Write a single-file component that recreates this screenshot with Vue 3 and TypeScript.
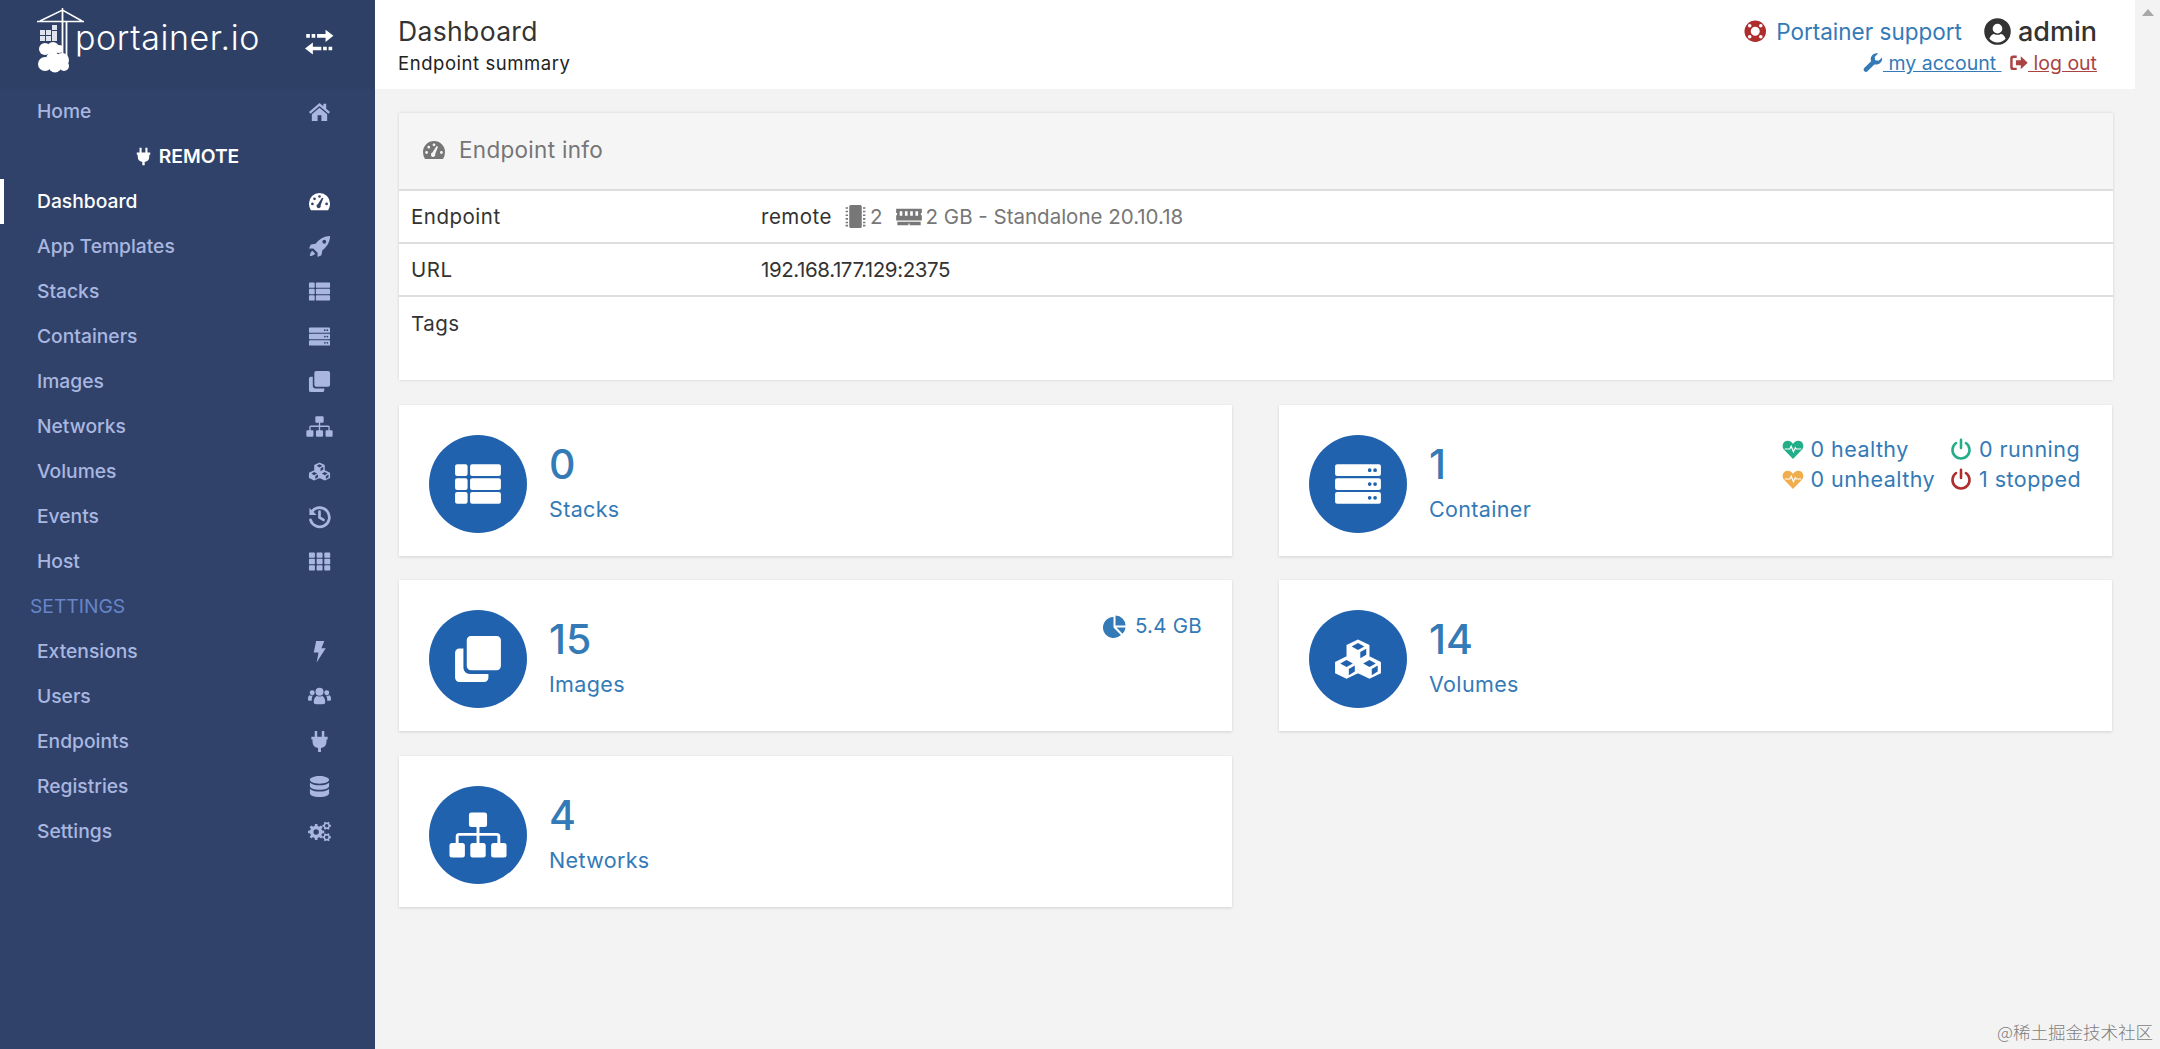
<script setup lang="ts">
import { h } from "vue";
import type { FunctionalComponent } from "vue";

type IconDef = { fill?: string; line?: string; cut?: string };

// rounded rectangle as a path fragment
function rr(x: number, y: number, w: number, ht: number, r = 1): string {
  return `M${x + r} ${y}h${w - 2 * r}a${r} ${r} 0 0 1 ${r} ${r}v${ht - 2 * r}a${r} ${r} 0 0 1 ${-r} ${r}h${2 * r - w}a${r} ${r} 0 0 1 ${-r} ${-r}v${2 * r - ht}a${r} ${r} 0 0 1 ${r} ${-r}z`;
}

function circle(cx: number, cy: number, r: number): string {
  return `M${cx - r} ${cy}a${r} ${r} 0 1 0 ${2 * r} 0a${r} ${r} 0 1 0 ${-2 * r} 0z`;
}

// one isometric box of the "cubes" icon: outline, top hole and side hole
function cube(cx: number, cy: number, s: number): string {
  const w = s * 1.02;
  const outer = `M${cx} ${cy - s}L${cx + w} ${cy - s / 2}V${cy + s / 2}L${cx} ${cy + s}L${cx - w} ${cy + s / 2}V${cy - s / 2}z`;
  const top = `M${cx} ${cy - s * 0.68}L${cx + w * 0.55} ${cy - s * 0.36}L${cx} ${cy - s * 0.05}L${cx - w * 0.55} ${cy - s * 0.36}z`;
  const side = `M${cx + w * 0.2} ${cy + s * 0.12}L${cx + w * 0.72} ${cy - s * 0.18}V${cy + s * 0.36}L${cx + w * 0.2} ${cy + s * 0.68}z`;
  return outer + top + side;
}

function gear(cx: number, cy: number, r: number, hole: number, teeth = 8): string {
  const pts: string[] = [];
  const step = (Math.PI * 2) / teeth;
  for (let i = 0; i < teeth; i++) {
    const a = i * step;
    const p = (rad: number, off: number) =>
      `${(cx + rad * Math.cos(a + off)).toFixed(2)} ${(cy + rad * Math.sin(a + off)).toFixed(2)}`;
    pts.push(p(r * 0.74, -step * 0.5), p(r * 0.78, -step * 0.28), p(r, -step * 0.2), p(r, step * 0.2), p(r * 0.78, step * 0.28));
  }
  return `M${pts.join("L")}z` + circle(cx, cy, hole);
}

const icons: Record<string, IconDef> = {
  home: { fill: "M12 3L1 12.5l1.6 1.9L12 6.3l9.4 8.1 1.6-1.9-4-3.5V4h-3v2.4zM12 8l-8 6.8V22h6v-6h4v6h6v-7.2z" },
  gauge: {
    fill:
      "M12 3A11 11 0 0 0 1 14q0 4 2 7h18q2-3 2-7A11 11 0 0 0 12 3z" +
      circle(4.6, 14.5, 1.4) + circle(6.8, 9.2, 1.4) + circle(12, 6.8, 1.4) + circle(19.4, 14.5, 1.4) +
      "M10.4 14.6L14.6 8l1.4.7-2.8 7.2a2.2 2.2 0 1 1-2.8-1.3z",
  },
  rocket: {
    fill:
      "M23 1C17 1 12 4 8 9L3 10 1 14h4.5l4.5 4.5V23l4-2 1-5c5-4 8-9 8-15z" + circle(17, 7, 2) +
      "M4.5 16.5l3 3c-1 1.5-3.5 2.5-5.5 2.5 0-2 1-4.5 2.5-5.5z",
  },
  stacks: {
    fill: [2.5, 9.2, 15.8].map((y) => rr(1, y, 6, 5.7, 1) + rr(8.2, y, 14.8, 5.7, 1)).join(""),
  },
  server: {
    fill: [2.5, 9.2, 15.8]
      .map((y) => rr(1, y, 22, 5.7, 1) + circle(17.6, y + 2.85, 0.9) + circle(20.2, y + 2.85, 0.9))
      .join(""),
  },
  clone: {
    fill: rr(6.6, 1, 16.4, 16.4, 2) + "M5 7H3a2 2 0 0 0-2 2v12a2 2 0 0 0 2 2h12a2 2 0 0 0 2-2v-1.8H8a3 3 0 0 1-3-3z",
  },
  sitemap: {
    fill:
      rr(7.65, 1.2, 8.7, 7, 1.2) + rr(-1.7, 15.8, 7.4, 7, 1.2) + rr(8.3, 15.8, 7.4, 7, 1.2) + rr(18.3, 15.8, 7.4, 7, 1.2) +
      "M11.3 8.2h1.4V11h8.3a1.700 1.700 0 0 1 1.700 1.700v3.100h-1.400v-3.400h-8.600v3.400h-1.400v-3.400H2.700v3.400H1.300v-3.100A1.700 1.700 0 0 1 3 11h8.300z",
  },
  cubes: { fill: cube(12, 8, 5.4) + cube(6.5, 16.1, 5.4) + cube(17.5, 16.1, 5.4) },
  history: {
    fill: "M1.5 3v7.5H9z",
    line: "M4.4 6.6A10 10 0 1 1 2.6 15.5M12 7v6l4.2 2.6",
  },
  grid: {
    fill: [2.5, 9.2, 15.8]
      .flatMap((y) => [1, 9, 17].map((x) => rr(x, y, 6.2, 5.7, 0.8)))
      .join(""),
  },
  bolt: { fill: "M8.5 1h8.500l-3 7.5H18.500L9 23.500l2-10.500H6z" },
  users: {
    fill:
      circle(12, 7, 4.2) + circle(4.4, 8, 2.6) + circle(19.6, 8, 2.6) +
      "M6 18c0-4 2-6.5 3.6-6.5 1.4.8 3.4.8 4.8 0C16 11.5 18 14 18 18c0 1.4-1 2-2.4 2H8.4C7 20 6 19.4 6 18z" +
      "M0 14.5c0-2.4.8-3.8 1.9-3.8 1 .6 2.400.7 3.300.3-1.200 1.300-1.300 3.500-1.300 5.500H1.500C.500 16.500 0 15.700 0 14.500z" +
      "M24 14.500c0-2.400-.8-3.800-1.900-3.800-1 .6-2.400.7-3.300.3 1.200 1.300 1.300 3.500 1.300 5.500h2.400c1 0 1.500-.8 1.500-2z",
  },
  plug: {
    fill: "M7 1h2.600v6h4.800V1H17v6h3.500v2.800h-1.200V12a7 7 0 0 1-5.800 6.900V23h-3v-4.100A7 7 0 0 1 4.700 12V9.800H3.500V7H7z",
  },
  database: {
    fill:
      "M12 1c5.500 0 10 1.800 10 4s-4.500 4-10 4S2 7.200 2 5s4.500-4 10-4z" +
      "M2 8c1.800 1.700 5.700 2.700 10 2.700S20.200 9.700 22 8v3.500c0 2.200-4.500 4-10 4s-10-1.800-10-4z" +
      "M2 14.500c1.800 1.700 5.700 2.700 10 2.700s8.200-1 10-2.700V19c0 2.200-4.500 4-10 4S2 21.200 2 19z",
  },
  cogs: {
    fill: gear(8.5, 12.5, 8.5, 2.8) + gear(19.5, 6, 4.5, 1.800, 6) + gear(19.5, 18, 4.5, 1.800, 6),
  },
  exchange: {
    fill:
      "M1 5h3v3H1zM5.500 5h3v3h-3zM10 5h7V1.500L23.500 6.500 17 11.500V8h-7z" +
      "M22.500 15.500h-3v3h3zM18 15.500h-3v3h3zM13.500 15.500h-7V12L0 17l6.500 5v-3.500h7z",
  },
  lifering: {
    fill:
      circle(12, 12, 11.5) + circle(12, 12, 4.8) + circle(6.1, 6.100, 1.900) + circle(17.9, 6.100, 1.900) +
      circle(6.100, 17.900, 1.900) + circle(17.900, 17.900, 1.900),
  },
  usercircle: {
    fill:
      circle(12, 12, 11.800) + circle(12, 9.500, 4.300) +
      "M4.800 18.500c.9-2.800 2.800-4.200 4.200-4.300 1.800 1 4.200 1 6 0 1.400.1 3.300 1.500 4.200 4.300C17.400 20.700 14.800 21.800 12 21.800s-5.400-1.100-7.200-3.300z",
  },
  wrench: {
    fill: "M23.500 5.500l-4.300 4-4.200-.6-.6-4.100L18.500.6C14.500-.4 10 2.500 9.500 7c-.1 1 .1 2 .5 3l-8.500 8.500c-1 1-1 3 .2 4 1.100 1 2.800 1 3.800 0L14 14c5 1.500 10.500-3 9.500-8.500z",
  },
  signout: {
    fill: "M9.500 3H5a3.500 3.500 0 0 0-3.500 3.500v11A3.500 3.500 0 0 0 5 21h4.500v-3H5.500a1 1 0 0 1-1-1V7a1 1 0 0 1 1-1h4zM8.500 9h6V4l8.500 8-8.500 8v-5h-6z",
  },
  heart: {
    fill: "M12 23L2 12.500C-.5 9.800.5 3 6.200 3 9 3 11 4.600 12 6.500 13 4.600 15 3 17.800 3c5.700 0 6.700 6.800 4.200 9.500z",
    cut: "M3 12h5.500l1.500-3 2.500 6 2-4.500 1 1.500H21",
  },
  power: { line: "M12 2v9M6.600 5.500a9.300 9.300 0 1 0 10.800 0" },
  pie: {
    fill:
      "M10.500 3v10.500l7.400 7.400A10.500 10.500 0 1 1 10.500 3z" +
      "M12.500 1.500a10 10 0 0 1 10 10h-10zM13.500 13.500h9a10 10 0 0 1-3 6.300z",
  },
  chip: {
    fill:
      rr(6, 1, 12, 22, 1.500) +
      [3, 6.500, 10, 13.500, 17, 20].map((y) => `M2.500 ${y}h2.300v1.500H2.500zM19.200 ${y}h2.300v1.500h-2.300z`).join(""),
  },
  ram: {
    fill:
      "M1 5h22v3.500h-.8v2h.8V15H1v-4.500h.8v-2H1z" +
      [4, 8.500, 13, 17.500].map((x) => `M${x} 7h2.300v4H${x}z`).join("") +
      "M2 16h20v3h-9.500v-1.500h-1V19H2z",
  },
};

const Icon: FunctionalComponent<{ name: string }> = (props) => {
  const def = icons[props.name];
  const children = [];
  if (def.fill) children.push(h("path", { d: def.fill, fill: "currentColor", "fill-rule": "evenodd" }));
  if (def.line)
    children.push(
      h("path", { d: def.line, fill: "none", stroke: "currentColor", "stroke-width": 2.8, "stroke-linecap": "round" }),
    );
  if (def.cut) children.push(h("path", { d: def.cut, fill: "none", stroke: "#fff", "stroke-width": 1.3 }));
  return h("svg", { viewBox: "0 0 24 24", class: "icon", "aria-hidden": "true" }, children);
};

const mainNav = [
  { label: "Dashboard", icon: "gauge", active: true },
  { label: "App Templates", icon: "rocket" },
  { label: "Stacks", icon: "stacks" },
  { label: "Containers", icon: "server" },
  { label: "Images", icon: "clone" },
  { label: "Networks", icon: "sitemap" },
  { label: "Volumes", icon: "cubes" },
  { label: "Events", icon: "history" },
  { label: "Host", icon: "grid" },
];

const settingsNav = [
  { label: "Extensions", icon: "bolt" },
  { label: "Users", icon: "users" },
  { label: "Endpoints", icon: "plug" },
  { label: "Registries", icon: "database" },
  { label: "Settings", icon: "cogs" },
];

const tiles = [
  { value: "0", label: "Stacks", icon: "stacks", kind: "" },
  { value: "1", label: "Container", icon: "server", kind: "containers" },
  { value: "15", label: "Images", icon: "clone", kind: "images" },
  { value: "14", label: "Volumes", icon: "cubes", kind: "" },
  { value: "4", label: "Networks", icon: "sitemap", kind: "" },
];
</script>

<template>
  <div class="layout">
    <aside class="sidebar">
      <div class="brand">
        <div class="logo">
          <svg class="crane" viewBox="0 0 47 66" aria-hidden="true">
            <path d="M0 13.500H47M25.500 0V3M3 13L25.500 2 45 13" fill="none" stroke="#fff" stroke-width="1.500" />
            <path d="M25.500 3V48M29.500 13V48" fill="none" stroke="#fff" stroke-width="1.800" />
            <path d="M3 22h5v5H3zM9 22h5v5H9zM3 28h5v5H3zM9 28h5v5H9zM15 17h5v5h-5zM15 23h5v10h-5z" fill="#dfe3ee" />
            <g fill="#fff">
              <circle cx="8" cy="41" r="6" /><circle cx="16" cy="40" r="6" /><circle cx="22" cy="41" r="4" />
              <circle cx="8" cy="56" r="7" /><circle cx="16" cy="51" r="7" /><circle cx="25" cy="52" r="7" />
              <circle cx="18" cy="58" r="6.500" /><circle cx="27" cy="58" r="5" />
            </g>
          </svg>
          <span class="logo-text">portainer.io</span>
        </div>
        <span class="toggle"><Icon name="exchange" /></span>
      </div>

      <nav class="nav">
        <a class="nav-item"><span>Home</span><span class="nav-icon"><Icon name="home" /></span></a>
        <div class="endpoint-name"><Icon name="plug" /> REMOTE</div>
        <a v-for="item in mainNav" :key="item.label" class="nav-item" :class="{ active: item.active }">
          <span>{{ item.label }}</span>
          <span class="nav-icon"><Icon :name="item.icon" /></span>
        </a>
        <div class="nav-heading">SETTINGS</div>
        <a v-for="item in settingsNav" :key="item.label" class="nav-item">
          <span>{{ item.label }}</span>
          <span class="nav-icon"><Icon :name="item.icon" /></span>
        </a>
      </nav>
    </aside>

    <div class="main">
      <header class="topbar">
        <div>
          <div class="title">Dashboard</div>
          <div class="subtitle">Endpoint summary</div>
        </div>
        <div class="account">
          <div class="account-top">
            <a class="support"><span class="ring"><Icon name="lifering" /></span>Portainer support</a>
            <span class="admin"><Icon name="usercircle" />admin</span>
          </div>
          <div class="account-links">
            <a class="link-blue"><Icon name="wrench" /><u> my account </u></a>
            <a class="link-red"><Icon name="signout" /><u> log out</u></a>
          </div>
        </div>
      </header>

      <main class="content">
        <section class="panel">
          <div class="panel-head"><Icon name="gauge" /><span>Endpoint info</span></div>
          <div class="info-row">
            <span class="info-key">Endpoint</span>
            <span class="info-val">
              <span>remote</span>
              <span class="muted">
                <span class="chip"><Icon name="chip" /></span>
                <span>2</span>
                <span class="ram"><Icon name="ram" /></span>
                <span>2 GB - Standalone 20.10.18</span>
              </span>
            </span>
          </div>
          <div class="info-row">
            <span class="info-key">URL</span>
            <span class="url">192.168.177.129:2375</span>
          </div>
          <div class="info-row tags">
            <span class="info-key">Tags</span>
          </div>
        </section>

        <div class="tiles">
          <section v-for="tile in tiles" :key="tile.label" class="tile">
            <div class="tile-circle"><Icon :name="tile.icon" /></div>
            <div class="tile-text">
              <div class="tile-value">{{ tile.value }}</div>
              <div class="tile-label">{{ tile.label }}</div>
            </div>
            <div v-if="tile.kind === 'containers'" class="status">
              <span><span class="s-icon green"><Icon name="heart" /></span>0 healthy</span>
              <span><span class="s-icon green"><Icon name="power" /></span>0 running</span>
              <span><span class="s-icon orange"><Icon name="heart" /></span>0 unhealthy</span>
              <span><span class="s-icon red"><Icon name="power" /></span>1 stopped</span>
            </div>
            <div v-if="tile.kind === 'images'" class="size"><Icon name="pie" />5.4 GB</div>
          </section>
        </div>
      </main>
    </div>

    <div class="scrollbar"><span class="arrow"></span></div>
    <div class="watermark">@稀土掘金技术社区</div>
  </div>
</template>

<style>
html,
body {
  margin: 0;
  background: #f3f3f3;
}
</style>

<style scoped>
.layout {
  display: flex;
  min-height: 1049px;
  font-family: Inter, "Noto Sans", sans-serif;
  font-size: 19.25px;
  color: #333;
  overflow: hidden;
  height: 1049px;
}

.icon {
  width: 1em;
  height: 1em;
  flex: none;
  display: inline-block;
  vertical-align: -0.14em;
  overflow: visible;
}

.sidebar {
  width: 375px;
  flex: none;
  background: #30426a;
}

.brand {
  height: 88.5px;
  background: #2e4066;
  display: flex;
  align-items: center;
  justify-content: space-between;
  padding: 0 44px 0 37px;
  box-sizing: border-box;
}

.logo {
  display: flex;
  align-items: flex-start;
  height: 64px;
  margin-top: -9px;
}

.crane {
  width: 47px;
  height: 66px;
  margin-right: -9px;
}

.logo-text {
  color: #fff;
  font-size: 34px;
  font-weight: 300;
  letter-spacing: 0.6px;
  line-height: 1;
  margin-top: 13px;
}

.toggle {
  width: 24px;
  font-size: 29px;
  color: #fff;
  display: flex;
  justify-content: center;
  margin-top: -3px;
}

.nav-item,
.endpoint-name,
.nav-heading {
  height: 45px;
  display: flex;
  align-items: center;
  box-sizing: border-box;
}

.nav-item {
  justify-content: space-between;
  padding: 0 44px 0 37px;
  color: #a9b7e0;
  font-weight: 500;
}

.nav-item.active {
  color: #fff;
  border-left: 4px solid #fff;
  padding-left: 33px;
}

.nav-icon {
  width: 24px;
  font-size: 23px;
  display: flex;
  justify-content: center;
}

.endpoint-name {
  justify-content: center;
  gap: 6px;
  padding-right: 2px;
  color: #fff;
  font-weight: 600;
}

.endpoint-name .icon {
  font-size: 19px;
}

.nav-heading {
  padding-left: 30px;
  color: #6785c8;
}

.main {
  flex: 1;
  min-width: 0;
  display: flex;
  flex-direction: column;
}

.topbar {
  height: 89px;
  flex: none;
  background: #fff;
  display: flex;
  justify-content: space-between;
  box-sizing: border-box;
  padding: 15px 38px 0 23px;
}

.title {
  font-size: 26.5px;
  line-height: 33px;
  letter-spacing: 0.35px;
}

.subtitle {
  font-size: 18.5px;
  line-height: 24px;
  margin-top: 3px;
  letter-spacing: 0.55px;
  color: #222;
}

.account {
  display: flex;
  flex-direction: column;
  align-items: flex-end;
}

.account-top {
  display: flex;
  align-items: center;
  gap: 22px;
  height: 32px;
}

.support {
  color: #337ab7;
  font-size: 22.5px;
  display: flex;
  align-items: center;
  gap: 10px;
}

.ring {
  color: #ae2d2d;
  display: flex;
}

.admin {
  display: flex;
  align-items: center;
  gap: 7px;
  font-size: 27px;
  font-weight: 500;
  color: #333;
}

.account-links {
  display: flex;
  gap: 7px;
  font-size: 19.5px;
  margin-top: 4px;
  line-height: 24px;
}

.link-blue {
  color: #337ab7;
  white-space: pre;
}

.link-red {
  color: #a94442;
  white-space: pre;
}

.content {
  padding: 24px 22px 0 24px;
}

.panel {
  background: #fff;
  box-shadow: 0 0 3px rgba(0, 0, 0, 0.14);
}

.panel-head {
  height: 78px;
  background: #f5f5f5;
  border-bottom: 2px solid #ddd;
  box-sizing: border-box;
  display: flex;
  align-items: center;
  gap: 13px;
  padding: 0 0 3px 23px;
  color: #767676;
  font-size: 22.5px;
  letter-spacing: 0.3px;
}

.panel-head .icon {
  font-size: 24px;
}

.info-row {
  height: 53px;
  display: flex;
  align-items: center;
  padding-left: 12px;
  box-sizing: border-box;
  border-bottom: 2px solid #ddd;
  font-size: 20.5px;
  letter-spacing: 0.5px;
}

.info-row.tags {
  height: 83px;
  align-items: flex-start;
  padding-top: 14px;
  border-bottom: none;
}

.info-key {
  width: 350px;
  flex: none;
}

.info-val,
.muted {
  display: flex;
  align-items: center;
}

.url {
  letter-spacing: -0.4px;
}

.muted {
  color: #777;
  margin-left: 11px;
  letter-spacing: 0;
}

.chip {
  font-size: 25px;
  display: flex;
  margin-right: 2px;
}

.ram {
  font-size: 28px;
  display: flex;
  margin-left: 12px;
  margin-right: 3px;
}

.tiles {
  display: grid;
  grid-template-columns: 833px 833px;
  column-gap: 47px;
  row-gap: 24.5px;
  margin-top: 24.5px;
}

.tile {
  height: 151px;
  background: #fff;
  box-shadow: 0 1px 3px rgba(0, 0, 0, 0.14);
  display: flex;
  align-items: flex-start;
  box-sizing: border-box;
  padding: 30px;
  position: relative;
  color: #337ab7;
}

.tile-circle {
  width: 98px;
  height: 98px;
  flex: none;
  border-radius: 50%;
  background: #2162ae;
  color: #fff;
  font-size: 50px;
  display: flex;
  align-items: center;
  justify-content: center;
}

.tile-text {
  margin-left: 22px;
}

.tile-value {
  font-size: 41px;
  font-weight: 500;
  line-height: 48px;
  margin-top: 5px;
}

.tile-label {
  font-size: 21.5px;
  line-height: 26px;
  margin-top: 8px;
  letter-spacing: 0.35px;
}

.status {
  margin-left: auto;
  margin-right: 1px;
  display: grid;
  grid-template-columns: auto auto;
  column-gap: 15px;
  row-gap: 4px;
  font-size: 21.5px;
  line-height: 26px;
  letter-spacing: 0.45px;
  margin-top: 1px;
}

.status > span {
  display: flex;
  align-items: center;
}

.s-icon {
  font-size: 22px;
  display: flex;
  margin-right: 7px;
}

.green {
  color: #23ae89;
}

.orange {
  color: #f0ad4e;
}

.red {
  color: #ae2d2d;
}

.size {
  margin-left: auto;
  margin-top: 3px;
  display: flex;
  align-items: center;
  gap: 8px;
  font-size: 20.5px;
  line-height: 26px;
  letter-spacing: 0.25px;
}

.size .icon {
  font-size: 24px;
}

.scrollbar {
  width: 25px;
  flex: none;
  background: #f3f3f3;
  display: flex;
  justify-content: center;
  padding-top: 9px;
  box-sizing: border-box;
}

.arrow {
  width: 0;
  height: 0;
  border-left: 6px solid transparent;
  border-right: 6px solid transparent;
  border-bottom: 7px solid #a8a8a8;
}

.watermark {
  position: absolute;
  right: 7px;
  bottom: 5px;
  font-family: "Noto Sans CJK SC", sans-serif;
  font-size: 17.5px;
  font-weight: 300;
  color: #7e7e7e;
}
</style>
